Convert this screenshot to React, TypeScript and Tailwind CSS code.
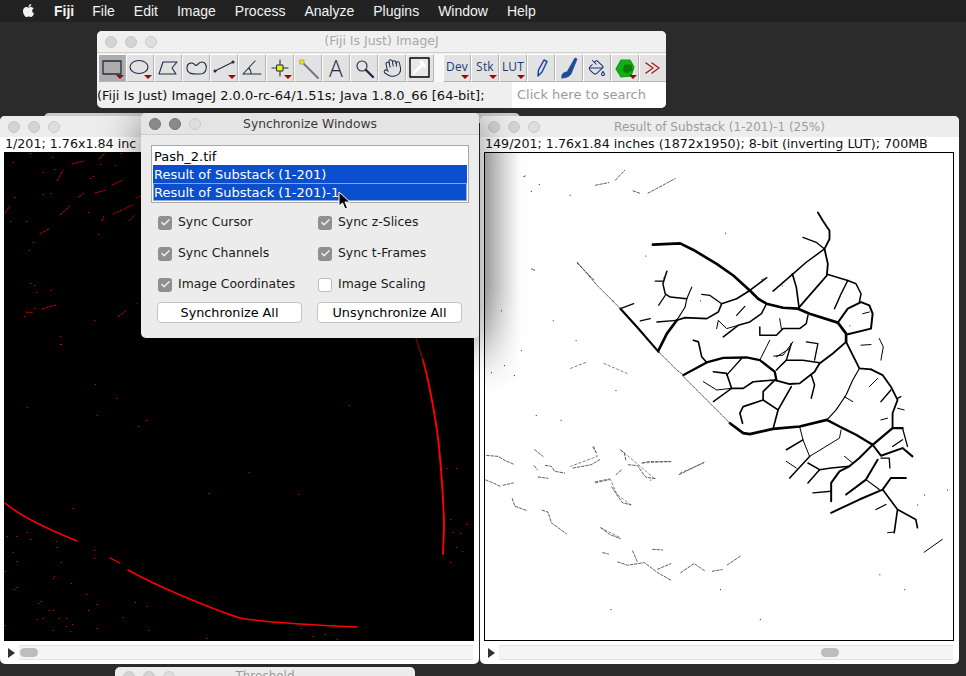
import React from 'react';
import { FaApple } from 'react-icons/fa';
import { Check, Hand, PaintBucket } from 'lucide-react';

const menus = ['File', 'Edit', 'Image', 'Process', 'Analyze', 'Plugins', 'Window', 'Help'];

// vessels, in coordinates of a 3x crop starting at (570,200): [stroke width, points]
const vessels: [number, string][] = [
  [8, '248,132 330,128 370,148 440,190 490,225 540,270 565,295 590,310 640,322 685,325 720,340 805,367'],
  [8, '805,367 830,400 830,425'],
  [5.5, '830,425 790,460 750,490 735,515 690,550 660,552 615,540'],
  [5.5, '830,425 850,465 870,505 905,508'],
  [3.5, '870,505 850,540 830,585 800,630 772,660'],
  [8, '480,670 520,700 540,703 610,687 690,680 772,660'],
  [7, '772,660 810,680 860,705 910,735'],
  [7, '910,735 970,685 1000,685'],
  [6, '910,735 935,768 1000,745 1030,770'],
  [6, '910,735 870,775 840,800 810,815 785,850 785,905'],
  [5.5, '685,325 772,225 775,190 765,145 780,115 780,90 760,60 745,35'],
  [4, '765,145 740,125 700,110'],
  [4.5, '765,145 710,185 670,220 610,272'],
  [5, '668,220 680,260 688,320'],
  [4.5, '775,222 835,240 860,250 875,280 870,305'],
  [4.5, '835,240 815,280 795,325'],
  [6, '805,367 835,325 875,305 900,315 910,340 905,385 835,402'],
  [6.5, '150,325 200,380 265,455'],
  [8, '265,450 290,400 320,360'],
  [5, '320,360 345,352 410,355 445,335 455,310 500,295 540,270 590,232'],
  [3.5, '320,360 345,320 350,295 365,260'],
  [4.5, '350,295 300,290 285,280 278,250 290,212'],
  [4, '255,242 280,242'],
  [3.5, '285,285 265,315'],
  [4, '455,310 420,285 395,282'],
  [4, '150,325 190,310'],
  [4, '210,362 240,355'],
  [4, '260,365 320,360'],
  [4.5, '590,310 575,340 540,365 505,375 460,410'],
  [3, '505,375 470,385 445,360 440,385'],
  [3.5, '525,318 500,345'],
  [7, '340,525 410,487 460,473 530,472 570,480 615,515 620,540'],
  [4.5, '620,510 650,480 665,430'],
  [4.5, '650,480 700,480 750,488'],
  [4, '735,480 745,430 710,425'],
  [5, '615,540 580,575 580,600 625,630 665,560'],
  [5, '580,600 520,620 510,640 518,670'],
  [5, '625,630 610,687'],
  [5, '610,540 550,545 520,565 485,565 470,520 430,515'],
  [4, '485,565 430,605'],
  [3, '485,565 440,570 400,545'],
  [4, '470,525 515,475'],
  [4.5, '725,525 735,555 725,595'],
  [4.5, '715,345 710,370 690,385 640,385 620,405 570,405 570,380'],
  [3, '635,385 630,355'],
  [5, '410,487 395,470 385,425 370,420'],
  [3, '570,480 590,440 600,420'],
  [3, '620,470 660,445'],
  [5.5, '905,508 940,525 965,560 985,600 970,640 970,685'],
  [4.5, '965,570 935,605'],
  [3, '985,625 1005,630'],
  [4, '985,595 995,590'],
  [4, '1000,685 1015,740'],
  [4, '970,740 1000,720'],
  [3, '690,680 700,720 720,770'],
  [4.5, '720,770 660,835'],
  [4.5, '700,720 650,750'],
  [3, '720,770 810,715 815,690'],
  [4.5, '715,790 750,810 785,805 840,800'],
  [4.5, '750,810 715,850'],
  [3, '650,785 680,805'],
  [4, '935,775 960,775 962,805'],
  [6, '925,780 890,840 830,885'],
  [3.5, '890,840 930,870'],
  [6, '785,940 870,900 940,870 965,835 1010,835'],
  [5, '940,870 985,930 1040,960 1045,985'],
  [5, '985,930 975,1000'],
  [4, '785,875 730,880'],
  [4, '920,930 950,915'],
  [3, '875,435 905,433'],
  [3, '930,415 942,440 935,480'],
  [3, '825,590 850,605'],
  [3, '1065,1059 1120,1020'],
  [3, '670,425 640,465 612,468'],
  [3, '880,340 900,335'],
  [3, '900,560 925,535'],
  [3, '935,660 955,655'],
  [3, '825,770 850,790'],
  [3, '955,1000 975,998'],
];

// the broken, hair-thin stretches of the big veins
const hair: string[] = [
  '20,185 80,255 150,325',
  '265,455 320,510 340,525',
  '340,530 430,620 480,670',
];

// faint venules, 3x crop starting at (484,400)
const faint: string[] = [
  '5,167 40,170 60,182 85,193',
  '2,241 25,250 45,260',
  '55,257 85,250',
  '150,150 175,170',
  '148,198 158,210',
  '182,197 200,200 210,215 240,220',
  '160,232 190,236',
  '265,205 320,195 350,177',
  '325,142 335,158',
  '410,152 420,160 425,185',
  '432,195 460,198 475,220 485,233 515,237',
  '475,190 490,186 560,186',
  '395,225 412,210',
  '332,247 375,238',
  '382,262 400,290 415,310 440,316',
  '82,297 90,320 125,333',
  '172,332 190,338 200,370 245,403',
  '350,385 375,405 408,418',
  '400,488 430,498 480,490 520,520 560,543',
  '445,455 460,490',
  '520,510 560,493',
  '590,520 630,493 665,517',
  '685,516 715,511',
  '730,497 770,470',
  '505,450 535,452',
  '585,225 660,188',
  '355,460 372,464',
];

// scattered pieces in the top of the right image, 3x crop starting at (480,150)
const upper: string[] = [
  '345,103 385,95',
  '405,88 433,58',
  '458,120 478,127',
  '503,127 585,83',
  '152,355 158,358',
  '290,338 340,388',
  '550,385 560,362',
  '845,388 862,382',
  '128,77 134,75',
];

// the same sparse venules left of the leaf, 3x crop starting at (570,200)
const sparse: string[] = [
  '0,505 50,485',
  '100,490 170,520',
  '70,740 80,770 0,800',
  '150,750 210,800 250,835',
  '215,790 300,785',
  '330,820 400,790',
  '75,850 120,840 140,885 180,915',
  '90,985 150,1015',
];

const specks: [number, number][] = [
  [13, 162], [30, 153], [52, 157], [43, 172], [54, 169], [100, 164], [121, 153], [115, 165], [90, 178], [93, 176],
  [50, 193], [15, 197], [43, 194], [26, 221], [10, 221], [88, 212], [98, 234], [33, 242], [29, 250], [34, 285], [36, 292],
  [30, 283], [51, 290], [35, 308], [24, 316], [94, 320], [60, 344], [27, 407], [61, 344], [95, 384], [97, 415], [138, 426],
  [116, 398], [146, 420], [208, 493], [73, 508], [16, 536], [27, 532], [31, 539], [7, 536], [56, 541], [57, 547], [13, 552],
  [16, 561], [94, 550], [94, 558], [61, 562], [54, 576], [53, 578], [5, 571], [71, 583], [14, 589], [17, 587], [41, 601],
  [38, 603], [53, 610], [49, 610], [59, 618], [37, 619], [43, 618], [66, 618], [66, 626], [72, 624], [70, 631], [86, 594],
  [97, 604], [88, 610], [97, 628], [123, 617], [135, 602], [147, 606], [148, 630], [137, 303], [60, 336], [5, 625], [53, 630],
  [298, 494], [249, 472], [349, 405], [447, 468], [456, 468], [450, 519], [450, 562], [467, 524], [460, 533], [462, 551],
  [453, 532], [456, 547], [301, 628], [313, 636], [337, 639], [325, 634], [207, 638],
];

const vesselSpecks: [number, number][] = [
  [538, 183], [569, 194], [530, 190], [533, 269], [490, 372], [503, 365], [513, 375], [520, 350], [535, 415], [552, 320],
  [645, 255], [612, 300], [700, 300], [725, 232], [782, 285], [828, 263], [850, 325], [925, 495], [948, 490], [918, 505],
  [500, 310], [575, 340], [615, 390], [560, 420], [650, 480], [880, 575], [905, 590], [610, 610], [720, 590], [760, 620],
];

const TrafficLights = ({ active = false, className = '' }: { active?: boolean; className?: string }) => (
  <div className={`flex gap-2 ${className}`}>
    <span className={`w-3 h-3 rounded-full border ${active ? 'bg-[#8a8a8a] border-[#777]' : 'bg-[#d4d4d4] border-[#c6c6c6]'}`} />
    <span className={`w-3 h-3 rounded-full border ${active ? 'bg-[#8a8a8a] border-[#777]' : 'bg-[#d4d4d4] border-[#c6c6c6]'}`} />
    <span className="w-3 h-3 rounded-full border bg-[#dedede] border-[#cbcbcb]" />
  </div>
);

const Tool = ({ children, menu, selected }: { children: React.ReactNode; menu?: boolean; selected?: boolean }) => (
  <div
    className={`relative w-[28px] h-[28px] flex-none flex items-center justify-center border border-t-white border-l-white border-r-[#b4b4b4] border-b-[#b4b4b4] ${selected ? 'bg-[#acacac]' : 'bg-[#e2e2e2]'}`}
  >
    {children}
    {menu && <span className="absolute right-[1px] bottom-[2px] w-0 h-0 border-l-[4px] border-r-[4px] border-t-[4px] border-l-transparent border-r-transparent border-t-[#a80000]" />}
  </div>
);

const Icon = ({ children }: { children: React.ReactNode }) => (
  <svg width="26" height="26" viewBox="0 0 26 26" fill="none" stroke="#1d2c46" strokeWidth="1.1" strokeLinejoin="round" strokeLinecap="round">
    {children}
  </svg>
);

const LabelTool = ({ label }: { label: string }) => (
  <Tool menu>
    <span className="text-[12px] text-[#1f3a78] font-['Open_Sans',sans-serif] -mt-[3px] tracking-[0.2px]">{label}</span>
  </Tool>
);

const Toolbar = () => (
  <div className="absolute left-[97px] top-[31px] w-[569px] h-[77px] rounded-[5px] overflow-hidden bg-[#efefef] flex flex-col">
    <div className="h-[22px] flex-none relative flex items-center justify-center bg-[#f0f0f0] border-b border-[#cfcfcf]">
      <TrafficLights className="absolute left-[8px] top-[5px]" />
      <span className="text-[12.5px] text-[#a9a9a9] font-['DejaVu_Sans',sans-serif]">(Fiji Is Just) ImageJ</span>
    </div>
    <div className="h-[29px] flex-none flex pl-[1px] pt-[1px]">
      <Tool selected menu>
        <Icon><rect x="4" y="6" width="18" height="13" strokeWidth="1.3" /></Icon>
      </Tool>
      <Tool menu><Icon><ellipse cx="12" cy="12" rx="9" ry="6.5" /></Icon></Tool>
      <Tool><Icon><path d="M8 7 L22 7 L17 13 L21 19 L4 19 Z" /></Icon></Tool>
      <Tool><Icon><path d="M4 13 C4 7 10 7 12 10 C14 12 15 7 19 7 C25 7 25 19 17 19 C12 19 4 20 4 13 Z" /></Icon></Tool>
      <Tool menu><Icon><path d="M4 16 L22 7" /><circle cx="4" cy="16" r="1" fill="#1d2c46" /><circle cx="22" cy="7" r="1" fill="#1d2c46" /></Icon></Tool>
      <Tool><Icon><path d="M22 19 L4 19 L16 6 M12 19 C12 16 11 14 9.5 13" /></Icon></Tool>
      <Tool menu><Icon><path d="M13 5 V21 M5 13 H21" /><rect x="10" y="10" width="6" height="6" fill="#f6f000" strokeWidth="1" /></Icon></Tool>
      <Tool><Icon><path d="M9 9 L23 23" stroke="#6a7480" strokeWidth="1.8" /><rect x="5" y="5" width="4" height="4" fill="#f2e400" stroke="#888" strokeWidth="0.6" /></Icon></Tool>
      <Tool><span className="text-[23px] leading-none text-[#1d2c46] font-['Open_Sans',sans-serif] font-light">A</span></Tool>
      <Tool><Icon><circle cx="11" cy="11" r="5" /><path d="M15 15 L22 22" strokeWidth="2.4" /></Icon></Tool>
      <Tool><Hand size={20} strokeWidth={1.2} color="#1d2c46" className="-rotate-12" /></Tool>
      <Tool>
        <Icon>
          <rect x="3" y="3" width="19" height="19" stroke="#000" strokeWidth="1.4" fill="#e8e8e8" />
          <path d="M7 18 L16 9" stroke="#fff" strokeWidth="2.6" />
          <path d="M14 7 L18 11" stroke="#fff" strokeWidth="2.6" />
        </Icon>
      </Tool>
      <div className="w-[9px] flex-none bg-[#f7f7f7]" />
      <LabelTool label="Dev" />
      <LabelTool label="Stk" />
      <LabelTool label="LUT" />
      <Tool><Icon><path d="M10 21 L10.5 15 L16 5 L19 6.5 L14 17 Z" stroke="#17479e" strokeWidth="1.5" /></Icon></Tool>
      <Tool><Icon><path d="M6 23 C5 19 8 17 11 17 L19 3 L21 4 L15 19 C13 22 9 23 6 23 Z" fill="#1e4a96" stroke="#1e4a96" strokeWidth="0.8" /></Icon></Tool>
      <Tool><PaintBucket size={18} strokeWidth={1.4} color="#17356f" /></Tool>
      <Tool menu>
        <Icon>
          <path d="M9 5 L18 5 L22 12 L19 21 L9 22 L4 14 Z" fill="#12b012" stroke="#0a9a0a" />
          <path d="M13 10 L19 10 L20 15 L15 18 L11 15 Z" fill="#087e08" stroke="#087e08" />
        </Icon>
      </Tool>
      <Tool>
        <Icon>
          <path d="M6 8 L13 13 L6 18 M12 8 L19 13 L12 18" stroke="#a51c1c" strokeWidth="1.4" />
        </Icon>
      </Tool>
    </div>
    <div className="flex-1 flex items-center text-[13px] text-[#111] font-['DejaVu_Sans',sans-serif]">
      <div className="w-[415px] whitespace-nowrap pt-[1px]">(Fiji Is Just) ImageJ 2.0.0-rc-64/1.51s; Java 1.8.0_66 [64-bit];</div>
      <div className="flex-1 h-full bg-white pl-[5px] flex items-center text-[#9b9b9b]">Click here to search</div>
    </div>
  </div>
);

const ImageWindow = ({ title, info, second, thumb, children }: { title?: string; info: string; second?: boolean; thumb: string; children: React.ReactNode }) => (
  <div className={`absolute top-[116px] w-[479px] h-[548px] rounded-[5px] overflow-hidden bg-white flex flex-col ${second ? 'left-[480px]' : 'left-0'}`}>
    <div className="h-[21px] flex-none relative flex items-center justify-center bg-[#ededed] pt-[1px]">
      <TrafficLights className="absolute left-[8px] top-[5px]" />
      <span className="text-[12px] text-[#9c9c9c] font-['DejaVu_Sans',sans-serif] whitespace-nowrap">{title}</span>
    </div>
    <div className="h-[15px] flex-none pl-[5px] text-[12.66px] leading-[14px] text-[#111] font-['DejaVu_Sans',sans-serif] whitespace-nowrap overflow-hidden">{info}</div>
    <div className="pl-[4px]">{children}</div>
    <div className="flex-1 flex items-center pl-[8px] pr-[6px] gap-[4px]">
      <span className="w-0 h-0 border-t-[5px] border-b-[5px] border-l-[7px] border-t-transparent border-b-transparent border-l-[#333]" />
      <div className="flex-1 h-[15px] bg-[#f5f5f5] border-y border-[#e2e2e2] flex items-center">
        <div className={`h-[9px] w-[18px] rounded-full bg-[#bdbdbd] ${thumb}`} />
      </div>
    </div>
  </div>
);

const RedImage = () => (
  <svg width="470" height="489" viewBox="4 152 470 489" className="block bg-black">
    <g fill="none" stroke="#ff0000" strokeLinecap="round" strokeLinejoin="round">
      <path strokeWidth="1.6" d="M5 503 C 20 516 45 528 77 541" />
      <path strokeWidth="1.2" d="M110 558 L120 563" />
      <path strokeWidth="1.5" d="M128 570 C 160 588 215 610 240 618 C 262 622 310 625 357 627" />
      <path strokeWidth="1.3" stroke="#a00000" d="M416 338 L423 360" />
      <path strokeWidth="1.9" d="M423 360 C 430 385 433 405 437 430 C 441 460 444 510 444 527 L443 554" />
      <g strokeWidth="0.8" strokeDasharray="2.5 1.5">
        <line x1="57" y1="181" x2="63" y2="170" />
        <line x1="72" y1="164" x2="84" y2="161" />
        <line x1="99" y1="159" x2="105" y2="153" />
        <line x1="60" y1="215" x2="70" y2="206" />
        <line x1="40" y1="234" x2="50" y2="228" />
        <line x1="102" y1="221" x2="104" y2="216" />
        <line x1="129" y1="221" x2="135" y2="215" />
        <line x1="113" y1="214" x2="133" y2="205" />
        <line x1="79" y1="197" x2="85" y2="192" />
        <line x1="95" y1="193" x2="106" y2="190" />
        <line x1="112" y1="185" x2="123" y2="180" />
        <line x1="136" y1="198" x2="141" y2="196" />
        <line x1="5" y1="213" x2="10" y2="206" />
        <line x1="26" y1="312" x2="33" y2="313" />
        <line x1="42" y1="309" x2="56" y2="305" />
        <line x1="118" y1="317" x2="127" y2="310" />
      </g>
    </g>
    <g fill="#e00000">
      {specks.map(([x, y]) => (
        <rect key={`${x}-${y}`} x={x} y={y} width="1" height="1" />
      ))}
    </g>
  </svg>
);

const VesselImage = () => (
  <svg width="470" height="489" viewBox="484 152 470 489" className="block bg-white border border-black box-border">
    <g transform="translate(570 200) scale(0.3333)" fill="none" stroke="#000" strokeLinecap="round" strokeLinejoin="round">
      {vessels.map(([w, pts]) => (
        <polyline key={pts} strokeWidth={w} points={pts} />
      ))}
      {hair.map((pts) => (
        <polyline key={pts} stroke="#333" strokeWidth="2.4" strokeDasharray="9 4" points={pts} />
      ))}
    </g>
    <g transform="translate(484 400) scale(0.3333)" fill="none" stroke="#222" strokeWidth="2.2" strokeDasharray="8 5" strokeLinecap="round" strokeLinejoin="round">
      {faint.map((pts) => (
        <polyline key={pts} points={pts} />
      ))}
    </g>
    <g transform="translate(480 150) scale(0.3333)" fill="none" stroke="#333" strokeWidth="2.4" strokeDasharray="8 5" strokeLinecap="round">
      {upper.map((pts) => (
        <polyline key={pts} points={pts} />
      ))}
    </g>
    <g transform="translate(570 200) scale(0.3333)" fill="none" stroke="#444" strokeWidth="2" strokeDasharray="7 7" strokeLinecap="round">
      {sparse.map((pts) => (
        <polyline key={pts} points={pts} />
      ))}
    </g>
    <g fill="#222">
      {vesselSpecks.map(([x, y]) => (
        <rect key={`${x}-${y}`} x={x} y={y} width="1" height="1" />
      ))}
    </g>
  </svg>
);

const Sync = ({ label, checked = true }: { label: string; checked?: boolean }) => (
  <div className="flex items-center gap-[6px] pl-[7px] h-[31px] text-[12.4px]">
    {checked ? (
      <span className="w-[14px] h-[14px] rounded-[3px] bg-[#8f8f8f] flex items-center justify-center">
        <Check size={11} strokeWidth={3} color="#f2f2f2" />
      </span>
    ) : (
      <span className="w-[14px] h-[14px] rounded-[3px] bg-white border border-[#bdbdbd]" />
    )}
    <span>{label}</span>
  </div>
);

const SyncDialog = () => (
  <div className="absolute left-[141px] top-[113px] w-[338px] h-[225px] rounded-[5px] bg-[#ececec] shadow-[0_6px_40px_rgba(0,0,0,0.5)] flex flex-col font-['DejaVu_Sans',sans-serif] text-[13px] text-[#1a1a1a]">
    <div className="h-[22px] flex-none relative flex items-center justify-center rounded-t-[5px] bg-[#e4e4e4] border-b border-[#cdcdcd] pt-[1px]">
      <TrafficLights active className="absolute left-[8px] top-[5px]" />
      <span className="text-[12.3px] text-[#3a3a3a]">Synchronize Windows</span>
    </div>
    <div className="px-[10px] pt-[10px]">
      <div className="h-[58px] bg-white border border-[#a8a8a8] p-[1px] leading-[20px]">
        <div className="h-[18px] pl-[1px] text-black">Pash_2.tif</div>
        <div className="h-[18px] pl-[1px] bg-[#0b4fcf] text-white">Result of Substack (1-201)</div>
        <div className="h-[18px] pl-[1px] bg-[#0b4fcf] text-white outline outline-1 -outline-offset-1 outline-[#8aa4dc]">Result of Substack (1-201)-1</div>
      </div>
      <div className="grid grid-cols-2 pt-[4px] w-[320px]">
        <Sync label="Sync Cursor" />
        <Sync label="Sync z-Slices" />
        <Sync label="Sync Channels" />
        <Sync label="Sync t-Frames" />
        <Sync label="Image Coordinates" />
        <Sync label="Image Scaling" checked={false} />
      </div>
      <div className="flex gap-[15px] pl-[6px] pt-[2px] text-[12.8px]">
        <div className="w-[145px] h-[21px] rounded-[4px] bg-white border border-[#c4c4c4] flex items-center justify-center text-black">Synchronize All</div>
        <div className="w-[145px] h-[21px] rounded-[4px] bg-white border border-[#c4c4c4] flex items-center justify-center text-black">Unsynchronize All</div>
      </div>
    </div>
  </div>
);

const App: React.FC = () => {
  return (
    <div className="relative w-[966px] h-[676px] overflow-hidden bg-[#2b2b2b]">
      <div className="h-[22px] bg-[#222222] flex items-center text-[14px] text-[#f2f2f2] font-['Liberation_Sans',sans-serif] pl-[21px]">
        <FaApple size={15} className="mr-[18px] -mt-[2px]" />
        <span className="font-bold mr-[18px]">Fiji</span>
        <div className="flex gap-[19px]">
          {menus.map((m) => (
            <span key={m}>{m}</span>
          ))}
        </div>
      </div>

      {/* Threshold window peeking in at the bottom */}
      <div className="absolute left-[115px] top-[667px] w-[300px] h-[30px] rounded-[5px] bg-[#ececec]">
        <TrafficLights className="absolute left-[8px] top-[4px]" />
        <div className="text-center text-[12px] text-[#9c9c9c] font-['DejaVu_Sans',sans-serif] leading-[18px]">Threshold</div>
      </div>

      <div className="absolute left-[44px] top-[113px] w-[476px] h-[10px] rounded-t-[5px] bg-[#c9c9c9]" />

      <ImageWindow info="1/201; 1.76x1.84 inc" thumb="ml-[1px]">
        <RedImage />
      </ImageWindow>
      <ImageWindow second title="Result of Substack (1-201)-1 (25%)" info="149/201; 1.76x1.84 inches (1872x1950); 8-bit (inverting LUT); 700MB" thumb="ml-[322px]">
        <VesselImage />
      </ImageWindow>

      {/* dialog's shadow falling over the right image */}
      <div className="absolute left-[485px] top-[153px] w-[36px] h-[240px] bg-gradient-to-r from-black/25 to-transparent [mask-image:linear-gradient(to_bottom,black_55%,transparent)]" />

      <SyncDialog />
      <Toolbar />

      {/* mouse pointer */}
      <svg className="absolute left-[338px] top-[191px]" width="14" height="20" viewBox="0 0 14 20">
        <path d="M1 1 L1 15 L4.5 12 L7 18 L9.5 17 L7 11 L12 11 Z" fill="#000" stroke="#fff" strokeWidth="1" />
      </svg>
    </div>
  );
};

export default App;
